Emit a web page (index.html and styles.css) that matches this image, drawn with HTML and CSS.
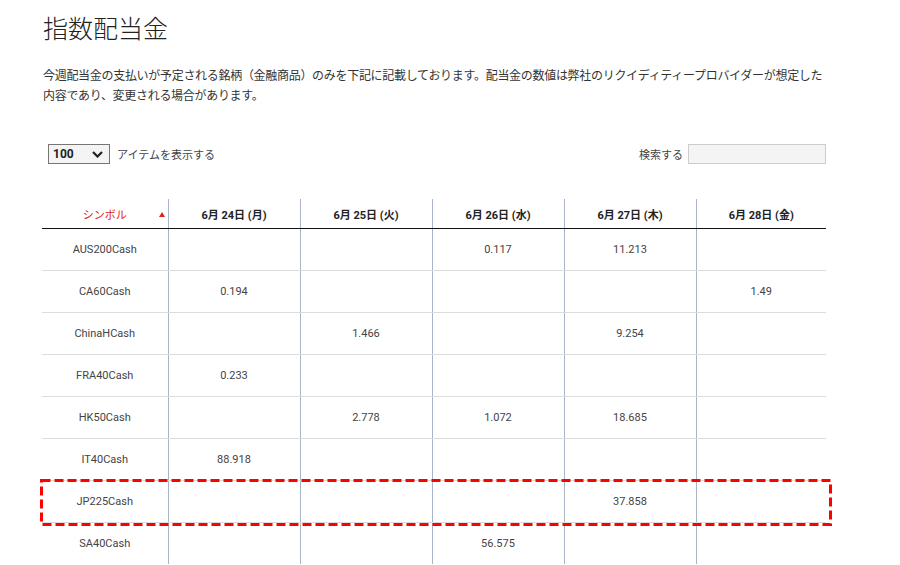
FILE: index.html
```html
<!DOCTYPE html>
<html lang="ja">
<head>
<meta charset="utf-8">
<link rel="stylesheet" href="styles.css">
</head>
<body>
<div class="page">
  <h1 class="title">指数配当金</h1>
  <p class="intro">今週配当金の支払いが予定される銘柄（金融商品）のみを下記に記載しております。配当金の数値は弊社のリクイディティープロバイダーが想定した内容であり、変更される場合があります。</p>
  <div class="controls">
    <div class="length">
      <div class="select"><span>100</span>
        <svg class="chev" width="11" height="7" viewBox="0 0 11 7"><path d="M1 1 L5.5 5.5 L10 1" fill="none" stroke="#222" stroke-width="2.2"/></svg>
      </div>
      <span class="label">アイテムを表示する</span>
    </div>
    <div class="search">
      <span class="label">検索する</span>
      <div class="input"></div>
    </div>
  </div>
  <div class="tablewrap">
    <table class="div-table">
      <colgroup>
        <col class="c0"><col class="c1"><col class="c1"><col class="c1"><col class="c1"><col class="c5">
      </colgroup>
      <thead>
        <tr>
          <th class="sym">シンボル<span class="arrow"></span></th>
          <th>6月 24日 (月)</th>
          <th>6月 25日 (火)</th>
          <th>6月 26日 (水)</th>
          <th>6月 27日 (木)</th>
          <th>6月 28日 (金)</th>
        </tr>
      </thead>
      <tbody>
        <tr><td>AUS200Cash</td><td></td><td></td><td>0.117</td><td>11.213</td><td></td></tr>
        <tr><td>CA60Cash</td><td>0.194</td><td></td><td></td><td></td><td>1.49</td></tr>
        <tr><td>ChinaHCash</td><td></td><td>1.466</td><td></td><td>9.254</td><td></td></tr>
        <tr><td>FRA40Cash</td><td>0.233</td><td></td><td></td><td></td><td></td></tr>
        <tr><td>HK50Cash</td><td></td><td>2.778</td><td>1.072</td><td>18.685</td><td></td></tr>
        <tr><td>IT40Cash</td><td>88.918</td><td></td><td></td><td></td><td></td></tr>
        <tr><td>JP225Cash</td><td></td><td></td><td></td><td>37.858</td><td></td></tr>
        <tr><td>SA40Cash</td><td></td><td></td><td>56.575</td><td></td><td></td></tr>
      </tbody>
    </table>
    <svg class="highlight" width="792" height="47" viewBox="0 0 792 47">
      <rect x="1.5" y="1.5" width="789" height="44" fill="none" stroke="#f00" stroke-width="3" stroke-dasharray="9 4"/>
    </svg>
  </div>
</div>
</body>
</html>
```
FILE: styles.css
```css
html, body {
  margin: 0;
  padding: 0;
  background: #fff;
}
body {
  font-family: Roboto, "Noto Sans CJK JP", sans-serif;
  color: #333;
  font-size: 12px;
  overflow: hidden;
}
.page {
  padding: 0 0 0 42px;
  width: 784px;
}
.title {
  font-family: "Noto Sans CJK JP", sans-serif;
  font-weight: 300;
  font-size: 25px;
  line-height: 30px;
  margin: 12px 0 0 1px;
  color: #222;
  letter-spacing: 0;
}
.intro {
  font-family: "Noto Sans CJK JP", sans-serif;
  font-size: 12px;
  line-height: 20px;
  margin: 23px 0 0 1px;
  color: #333;
  letter-spacing: -0.3px;
}
.controls {
  margin-top: 38px;
  display: flex;
  justify-content: space-between;
  align-items: center;
  height: 22px;
}
.length {
  display: flex;
  align-items: center;
  padding-left: 6px;
}
.select {
  box-sizing: border-box;
  width: 62px;
  height: 20px;
  border: 1px solid #767676;
  background: #f4f4f4;
  display: flex;
  align-items: center;
  justify-content: space-between;
  padding: 0 6px 0 4px;
  font-weight: 700;
  font-size: 12px;
  color: #222;
}
.chev { display: block; }
.label {
  font-family: "Noto Sans CJK JP", sans-serif;
  font-size: 11px;
  color: #444;
}
.length .label { margin-left: 7px; }
.search {
  display: flex;
  align-items: center;
}
.search .label { margin-right: 5px; }
.input {
  box-sizing: border-box;
  width: 138px;
  height: 20px;
  border: 1px solid #ccc;
  background: #f4f4f4;
}
.tablewrap {
  position: relative;
  margin-top: 34px;
}
.div-table {
  border-collapse: collapse;
  table-layout: fixed;
  width: 784px;
}
.c0 { width: 126px; }
.c1 { width: 132px; }
.c5 { width: 130px; }
th {
  height: 29px;
  padding: 0;
  font-weight: 700;
  font-size: 11px;
  color: #222;
  text-align: center;
  border-bottom: 1px solid #111;
  border-left: 1px solid #a9b4c8;
}
th:first-child, td:first-child { border-left: none; }
th.sym {
  color: #e02020;
  font-weight: 400;
  font-family: "Noto Sans CJK JP", sans-serif;
  position: relative;
}
.arrow {
  position: absolute;
  right: 3px;
  top: 13px;
  width: 0;
  height: 0;
  border-left: 3px solid transparent;
  border-right: 3px solid transparent;
  border-bottom: 5px solid #e02020;
}
td {
  height: 41px;
  padding: 0;
  text-align: center;
  font-size: 11px;
  color: #444;
  border-left: 1px solid #a9b4c8;
  border-bottom: 1px solid #ddd;
}
tbody tr:last-child td { border-bottom: none; }
.highlight {
  position: absolute;
  left: -2px;
  top: 280px;
  display: block;
}
```
